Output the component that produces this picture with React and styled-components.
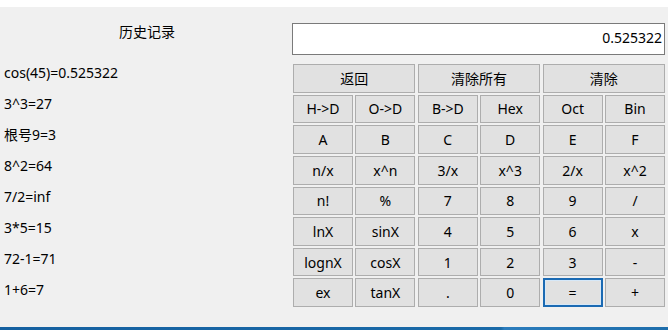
import styled, { createGlobalStyle } from 'styled-components';

const Global = createGlobalStyle`
  html, body { margin: 0; padding: 0; }
  body {
    width: 668px;
    height: 330px;
    overflow: hidden;
    background: #f0f0f0;
    font-family: "Noto Sans", "Noto Sans CJK SC", sans-serif;
    color: #000;
  }
`;

const Window = styled.div`
  width: 668px;
  height: 330px;
  display: flex;
  flex-direction: column;
  background: #f0f0f0;
`;

const TopStrip = styled.div`
  height: 7px;
  background: #fff;
`;

const Main = styled.div`
  flex: 1;
  display: flex;
`;

const Taskbar = styled.div`
  height: 3px;
  background: linear-gradient(90deg, #1560a0 0%, #1a6aa8 75%, #2b7cbc 75.5%, #1d6dab 100%);
`;

const History = styled.div`
  width: 292px;
  display: flex;
  flex-direction: column;
`;

const HistoryTitle = styled.div`
  margin-top: 15px;
  height: 20px;
  line-height: 20px;
  text-align: center;
  font-size: 14px;
  padding-left: 2px;
`;

const HistoryList = styled.div`
  margin-top: 15px;
  display: flex;
  flex-direction: column;
  padding-left: 4px;
`;

const HistoryItem = styled.div`
  height: 31px;
  line-height: 31px;
  font-size: 14px;
`;

const Calc = styled.div`
  flex: 1;
  display: flex;
  flex-direction: column;
  padding-top: 16px;
  padding-right: 3px;
`;

const Display = styled.div`
  height: 32px;
  box-sizing: border-box;
  border: 1px solid #7a7a7a;
  background: #fff;
  display: flex;
  align-items: center;
  justify-content: flex-end;
  padding: 0 2px 4px 0;
  font-size: 14px;
`;

const Pad = styled.div`
  margin-top: 9px;
  margin-left: 1px;
  height: 243px;
  display: grid;
  grid-template-columns: repeat(6, 1fr);
  grid-template-rows: repeat(8, 1fr);
  column-gap: 2.4px;
  row-gap: 2px;
`;

const Key = styled.button`
  grid-column: span ${p => p.$span || 1};
  margin: 0;
  padding: 0;
  font-family: inherit;
  font-size: 14px;
  color: #000;
  background: #e1e1e1;
  border: ${p => (p.$focus ? '2px solid #1b6ab3' : '1px solid #adadad')};
  box-shadow: ${p => (p.$focus ? 'inset 0 0 0 1px #d6e8f8' : 'none')};
  cursor: default;
  outline: none;
`;

const history = [
  'cos(45)=0.525322',
  '3^3=27',
  '根号9=3',
  '8^2=64',
  '7/2=inf',
  '3*5=15',
  '72-1=71',
  '1+6=7',
];

const keys = [
  ['H->D', 'O->D', 'B->D', 'Hex', 'Oct', 'Bin'],
  ['A', 'B', 'C', 'D', 'E', 'F'],
  ['n/x', 'x^n', '3/x', 'x^3', '2/x', 'x^2'],
  ['n!', '%', '7', '8', '9', '/'],
  ['lnX', 'sinX', '4', '5', '6', 'x'],
  ['lognX', 'cosX', '1', '2', '3', '-'],
  ['ex', 'tanX', '.', '0', '=', '+'],
];

export default function App() {
  return (
    <Window>
      <Global />
      <TopStrip />
      <Main>
        <History>
          <HistoryTitle>历史记录</HistoryTitle>
          <HistoryList>
            {history.map(h => (
              <HistoryItem key={h}>{h}</HistoryItem>
            ))}
          </HistoryList>
        </History>
        <Calc>
          <Display>0.525322</Display>
          <Pad>
            <Key $span={2}>返回</Key>
            <Key $span={2}>清除所有</Key>
            <Key $span={2}>清除</Key>
            {keys.flat().map((k, i) => (
              <Key key={i} $focus={k === '='}>{k}</Key>
            ))}
          </Pad>
        </Calc>
      </Main>
      <Taskbar />
    </Window>
  );
}
